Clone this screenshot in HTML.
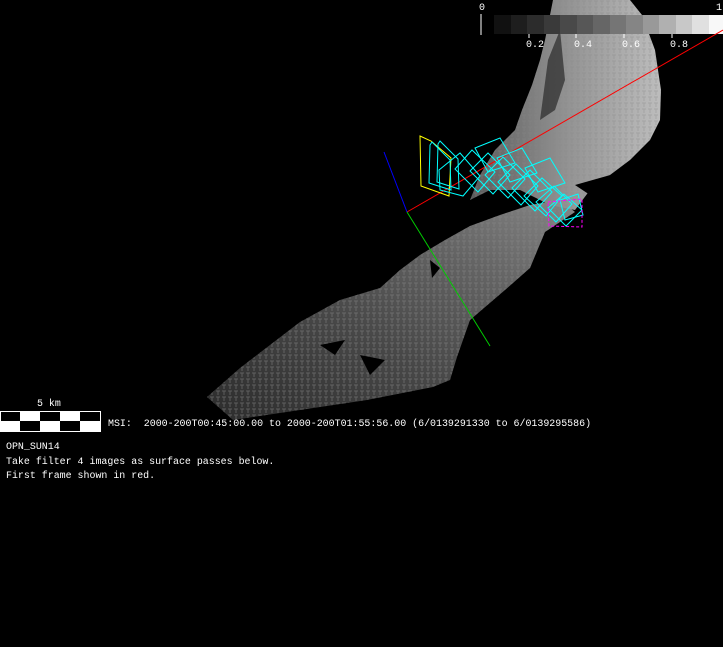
<!DOCTYPE html>
<html><head><style>
html,body{margin:0;padding:0;background:#000;width:723px;height:647px;overflow:hidden}
svg{position:absolute;left:0;top:0}
.t{position:absolute;color:#fff;font-family:"Liberation Mono",monospace;font-size:9.95px;white-space:pre;line-height:14.5px}
</style></head><body>
<svg width="723" height="647" viewBox="0 0 723 647">
<defs>
<linearGradient id="g1" x1="0" y1="1" x2="1" y2="0">
<stop offset="0" stop-color="#2c2c2c"/><stop offset="0.4" stop-color="#474747"/><stop offset="0.7" stop-color="#626262"/><stop offset="1" stop-color="#858585"/>
</linearGradient>
<linearGradient id="g2" x1="0" y1="0" x2="1" y2="0">
<stop offset="0" stop-color="#5a5a5a"/><stop offset="0.5" stop-color="#929292"/><stop offset="1" stop-color="#bdbdbd"/>
</linearGradient>
<pattern id="p" width="6" height="6" patternUnits="userSpaceOnUse"><path d="M0 1h4M2 1v4" stroke="#888" stroke-width="1"/></pattern>
</defs>
<path d="M207,397 L240,368 L300,322 L340,300 L380,288 L400,270 L420,255 L445,240 L470,226 L500,215 L530,205 L560,200 L575,212 L545,232 L530,268 L505,290 L470,320 L457,357 L450,380 L433,387 L367,400 L300,410 L233,420 Z" fill="url(#g1)"/>
<path d="M207,397 L240,368 L300,322 L340,300 L380,288 L400,270 L420,255 L445,240 L470,226 L500,215 L530,205 L560,200 L575,212 L545,232 L530,268 L505,290 L470,320 L457,357 L450,380 L433,387 L367,400 L300,410 L233,420 Z" fill="url(#p)" opacity="0.5"/>
<path d="M553,0 L630,0 L642,15 L655,50 L661,90 L660,120 L650,140 L630,160 L610,175 L590,190 L575,210 L550,205 L520,190 L490,190 L470,200 L480,175 L495,150 L515,130 L522,110 L532,85 L540,60 L545,40 Z" fill="url(#g2)"/>
<path d="M553,0 L630,0 L642,15 L655,50 L661,90 L660,120 L650,140 L630,160 L610,175 L590,190 L575,210 L550,205 L520,190 L490,190 L470,200 L480,175 L495,150 L515,130 L522,110 L532,85 L540,60 L545,40 Z" fill="url(#p)" opacity="0.4"/>
<path d="M548,60 L560,30 L565,80 L555,110 L540,120 Z" fill="#2a2a2a" opacity="0.7"/>
<path d="M575,185 L628,170 L590,195 Z" fill="#000"/>
<path d="M430,260 L440,268 L432,278 Z M320,345 L345,340 L335,355 Z M360,355 L385,360 L370,375 Z M497,360 L510,362 L503,372 Z" fill="#000"/>
<g>
<rect x="494" y="15" width="17" height="19" fill="#111"/>
<rect x="511" y="15" width="16" height="19" fill="#1e1e1e"/>
<rect x="527" y="15" width="17" height="19" fill="#2c2c2c"/>
<rect x="544" y="15" width="16" height="19" fill="#3a3a3a"/>
<rect x="560" y="15" width="17" height="19" fill="#494949"/>
<rect x="577" y="15" width="16" height="19" fill="#575757"/>
<rect x="593" y="15" width="17" height="19" fill="#666"/>
<rect x="610" y="15" width="16" height="19" fill="#757575"/>
<rect x="626" y="15" width="17" height="19" fill="#858585"/>
<rect x="643" y="15" width="16" height="19" fill="#999"/>
<rect x="659" y="15" width="17" height="19" fill="#b0b0b0"/>
<rect x="676" y="15" width="16" height="19" fill="#c8c8c8"/>
<rect x="692" y="15" width="17" height="19" fill="#e0e0e0"/>
<rect x="709" y="15" width="14" height="19" fill="#f8f8f8"/>
<path d="M481,14V35M529,34V38M576,34V38M624,34V38M672,34V38" stroke="#fff"/>
<g fill="#fff" font-family="Liberation Mono,monospace" font-size="10">
<text x="479" y="10">0</text><text x="716" y="10">1</text>
<text x="526" y="47">0.2</text><text x="574" y="47">0.4</text><text x="622" y="47">0.6</text><text x="670" y="47">0.8</text>
</g>
</g>
<line x1="407" y1="212" x2="723" y2="30" stroke="#f00"/>
<line x1="407" y1="212" x2="490" y2="346" stroke="#0c0"/>
<line x1="384" y1="152" x2="407" y2="212" stroke="#00f"/>
<polygon points="420,136 431,141 451,158 449,196 421,186" fill="none" stroke="#ff0"/>
<g fill="none" stroke="#0ff">
<polygon id="f" points="432,142 450,160 451,190 429,183 430,145" transform="translate(0,0)"/>
<polygon points="439,142 460,125 480,148 463,168 440,162" transform="translate(0,28) scale(1)"/>
<use href="#f" transform="translate(8,-1)"/>
<polygon points="455,149 472,130 495,152 478,172" transform="translate(0,20)"/>
<polygon points="470,149 488,131 510,153 493,172" transform="translate(0,22)"/>
<polygon points="485,149 503,131 525,153 508,172" transform="translate(0,26)"/>
<polygon points="498,152 516,134 538,156 521,175" transform="translate(0,30)"/>
<polygon points="512,152 530,134 552,156 535,175" transform="translate(0,36)"/>
<polygon points="524,158 542,140 562,158 546,178" transform="translate(0,38)"/>
<polygon points="536,162 554,146 572,164 556,182" transform="translate(0,40)"/>
<polygon points="548,168 564,154 582,170 566,186" transform="translate(0,40)"/>
<polygon points="505,160 530,150 545,175 518,184" transform="translate(-30,-12)"/>
<polygon points="505,160 530,150 545,175 518,184" transform="translate(-8,-2)"/>
<polygon points="505,160 530,150 545,175 518,184" transform="translate(20,8)"/>
<polygon points="560,200 578,194 583,215 565,220"/>
</g>
<polygon points="548,202 582,199 582,227 549,226" fill="none" stroke="#f0f" stroke-dasharray="3,2"/>
<rect x="0" y="411" width="101" height="21" fill="#fff"/>
<g fill="#000">
<rect x="1" y="412" width="19" height="9"/><rect x="40" y="412" width="20" height="9"/><rect x="80" y="412" width="20" height="9"/>
<rect x="20" y="421" width="20" height="10"/><rect x="60" y="421" width="20" height="10"/>
</g>
</svg>
<div class="t" style="left:37px;top:397px">5 km</div>
<div class="t" style="left:108px;top:417px">MSI:  2000-200T00:45:00.00 to 2000-200T01:55:56.00 (6/0139291330 to 6/0139295586)</div>
<div class="t" style="left:6px;top:440px">OPN_SUN14
Take filter 4 images as surface passes below.
First frame shown in red.</div>
</body></html>
